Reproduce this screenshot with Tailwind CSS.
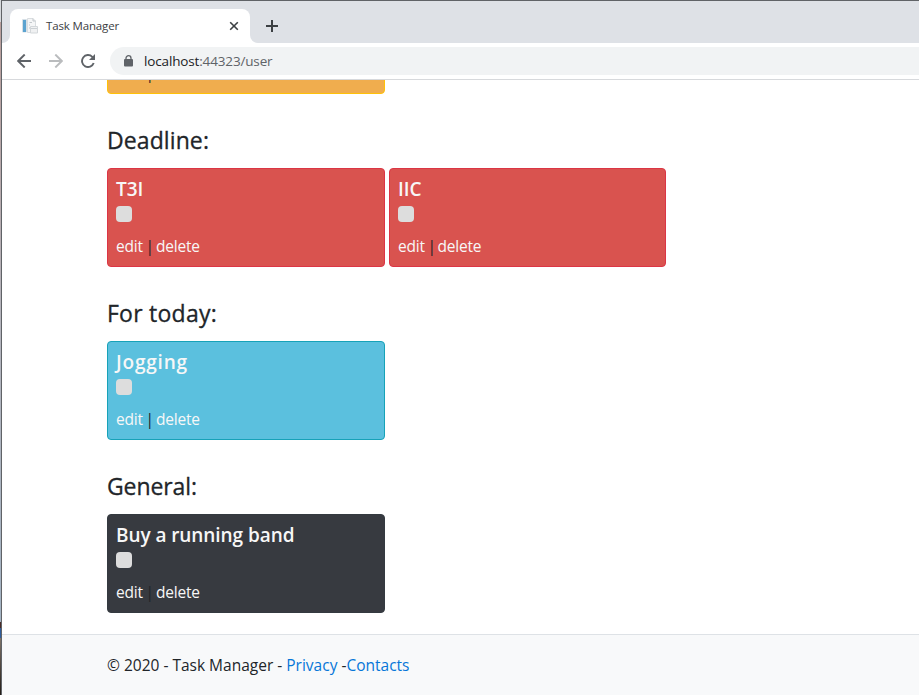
<!DOCTYPE html>
<html lang="en">
<head>
<meta charset="utf-8">
<title>Task Manager</title>
<script src="https://cdn.jsdelivr.net/npm/@tailwindcss/browser@4"></script>
</head>
<body class="flex h-[695px] w-[919px] overflow-hidden bg-white font-['Open_Sans','Noto_Sans',sans-serif] text-[#212529]">
  <div class="flex w-[2px] shrink-0 flex-col border-r border-[#606367]">
    <div class="h-[22px] bg-[#d5d8dc]"></div>
    <div class="h-[600px] bg-gradient-to-b from-[#b99e9b] via-[#b5b5bd] to-[#a3b3c3]"></div>
    <div class="h-[6px] bg-[#4b2b26]"></div>
    <div class="h-[10px] bg-[#2f5d9b]"></div>
    <div class="grow bg-gradient-to-b from-[#80756a] to-[#241d17]"></div>
  </div>
  <div class="flex min-w-0 grow flex-col">
    <div class="flex h-[43px] shrink-0 items-end border-t border-[#606367] bg-[#dee1e6]">
      <div class="h-2 w-2 bg-white"><div class="h-2 w-2 rounded-br-lg bg-[#dee1e6]"></div></div>
      <div class="flex h-[34px] w-[240px] items-center rounded-t-lg bg-white pl-3 pr-[11px]">
        <svg class="h-4 w-4 shrink-0" viewBox="0 0 16 16">
          <path d="M.5 1.500h4v12.500h-4z" fill="#e6eff6" stroke="#d5dfe6"/>
          <path d="M1 2h3v12H1z" fill="#5ba3d0"/>
          <path d="M5.500 .5h5.500l2.500 2.500v11.500h-8z" fill="#f5f6f7" stroke="#d9dde0"/>
          <path d="M11 .5V3h2.500M7.500 4.500h2.500M7 7h1M7 10h1" fill="none" stroke="#c2c7cb"/>
          <path d="M8.500 8.500h7v6.500h-7z" fill="#f0f1f2" stroke="#d3d7da"/>
          <path d="M9 10.500h6" stroke="#cbd0d4"/>
        </svg>
        <span class="ml-2 whitespace-nowrap text-[11.500px] leading-4 tracking-[-0.15px] text-[#3c4043]">Task Manager</span>
        <svg class="ml-auto h-[10px] w-[10px]" viewBox="0 0 10 10"><path d="M1.200 1.200l7.600 7.600M8.800 1.200L1.200 8.800" fill="none" stroke="#3c4043" stroke-width="1.600"/></svg>
      </div>
      <div class="h-2 w-2 bg-white"><div class="h-2 w-2 rounded-bl-lg bg-[#dee1e6]"></div></div>
      <svg class="mb-[11px] ml-2 h-3 w-3" viewBox="0 0 12 12"><path d="M6 0v12M0 6h12" stroke="#3c4043" stroke-width="2"/></svg>
    </div>
    <div class="flex h-[37px] shrink-0 items-center border-b border-[#d7d9dc] bg-white pl-[15px]">
      <svg class="h-[14px] w-[14px]" viewBox="0 0 14 14"><path d="M14 7H1.400M7.700 .5L1.200 7l6.500 6.500" fill="none" stroke="#5f6368" stroke-width="1.900"/></svg>
      <svg class="ml-[18px] h-[14px] w-[14px]" viewBox="0 0 14 14"><path d="M0 7h12.600M6.300 .5L12.800 7l-6.500 6.500" fill="none" stroke="#babcbe" stroke-width="1.900"/></svg>
      <svg class="ml-[18px] h-[14px] w-[14px]" viewBox="0 0 14 14"><path d="M12.700 9A6 6 0 1 1 11.300 2.800L12.500 4" fill="none" stroke="#5f6368" stroke-width="1.900"/><path d="M14 0v6H8z" fill="#5f6368"/></svg>
      <div class="ml-[15px] flex h-7 grow items-center rounded-l-full bg-[#f1f3f4] pl-[14px]">
        <svg class="h-3 w-[9px]" viewBox="0 0 9 12"><path d="M2 5V3.200a2.500 2.500 0 0 1 5 0V5" fill="none" stroke="#5f6368" stroke-width="1.300"/><rect y="4" width="9" height="7.500" rx="1" fill="#5f6368"/></svg>
        <span class="ml-[11px] whitespace-nowrap text-[13.500px] leading-5 tracking-[-0.15px] text-[#5f6368]"><span class="text-[#202124]">localhost</span>:44323/user</span>
      </div>
    </div>
    <main class="h-[554px] shrink-0 overflow-hidden pl-[105px]">
      <div class="flex h-[14px] items-end overflow-hidden">
        <div class="flex h-[99px] w-[278px] shrink-0 flex-col justify-end rounded border border-[#ffc107] bg-[#f0ad4e] px-2 pb-2">
          <div class="flex h-6 whitespace-nowrap text-[15.500px] leading-6 tracking-[-0.2px]"><a class="w-[29.500px] text-[#f7f7f7]">edit</a><span class="w-[10.500px]">|</span><a class="text-[#f7f7f7]">delete</a></div>
        </div>
      </div>
      <section class="pt-8">
        <h4 class="h-[29px] text-[23px] font-medium leading-[29px] tracking-[0.1px] [-webkit-text-stroke:0.3px]">Deadline:</h4>
        <div class="mt-[13px] flex gap-1">
          <article class="h-[99px] w-[278px] rounded border border-[#dc3545] bg-[#d9534f] px-2 pt-2">
            <h5 class="h-6 text-[19px] font-semibold leading-6 tracking-[0px] text-[#f7f7f7]">T3I</h5>
            <div class="mt-[5px] h-4 w-4 rounded bg-[#ddd]"></div>
            <div class="mt-[12px] flex whitespace-nowrap text-[15.500px] leading-6 tracking-[-0.2px]"><a class="w-[29.500px] text-[#f7f7f7]">edit</a><span class="w-[10.500px]">|</span><a class="text-[#f7f7f7]">delete</a></div>
          </article>
          <article class="h-[99px] w-[277px] rounded border border-[#dc3545] bg-[#d9534f] px-2 pt-2">
            <h5 class="h-6 text-[19px] font-semibold leading-6 tracking-[0px] text-[#f7f7f7]">IIC</h5>
            <div class="mt-[5px] h-4 w-4 rounded bg-[#ddd]"></div>
            <div class="mt-[12px] flex whitespace-nowrap text-[15.500px] leading-6 tracking-[-0.2px]"><a class="w-[29.500px] text-[#f7f7f7]">edit</a><span class="w-[10px]">|</span><a class="text-[#f7f7f7]">delete</a></div>
          </article>
        </div>
      </section>
      <section class="pt-8">
        <h4 class="h-[29px] text-[23px] font-medium leading-[29px] tracking-[0.25px] [-webkit-text-stroke:0.3px]">For today:</h4>
        <article class="mt-[13px] h-[99px] w-[278px] rounded border border-[#17a2b8] bg-[#5bc0de] px-2 pt-2">
          <h5 class="h-6 text-[19px] font-semibold leading-6 tracking-[0.8px] text-[#f7f7f7]">Jogging</h5>
          <div class="mt-[5px] h-4 w-4 rounded bg-[#ddd]"></div>
          <div class="mt-[12px] flex whitespace-nowrap text-[15.500px] leading-6 tracking-[-0.2px]"><a class="w-[29.500px] text-[#f7f7f7]">edit</a><span class="w-[10.500px]">|</span><a class="text-[#f7f7f7]">delete</a></div>
        </article>
      </section>
      <section class="pt-8">
        <h4 class="h-[29px] text-[23px] font-medium leading-[29px] tracking-[-0.1px] [-webkit-text-stroke:0.3px]">General:</h4>
        <article class="mt-[13px] h-[99px] w-[278px] rounded border border-[#343a40] bg-[#373a40] px-2 pt-2">
          <h5 class="h-6 text-[19px] font-semibold leading-6 tracking-[-0.07px] text-[#f7f7f7]">Buy a running band</h5>
          <div class="mt-[5px] h-4 w-4 rounded bg-[#ddd]"></div>
          <div class="mt-[12px] flex whitespace-nowrap text-[15.500px] leading-6 tracking-[-0.2px]"><a class="w-[29.500px] text-[#f7f7f7]">edit</a><span class="w-[10.500px]">|</span><a class="text-[#f7f7f7]">delete</a></div>
        </article>
      </section>
    </main>
    <footer class="flex grow items-center border-t border-[#dee2e6] bg-[#f8f9fa] pl-[105px]">
      <p class="whitespace-pre text-[15.500px] leading-6">© 2020 - Task Manager - <a class="text-[#0676d8]">Privacy</a> -<a class="text-[#0676d8]">Contacts</a></p>
    </footer>
  </div>
</body>
</html>
